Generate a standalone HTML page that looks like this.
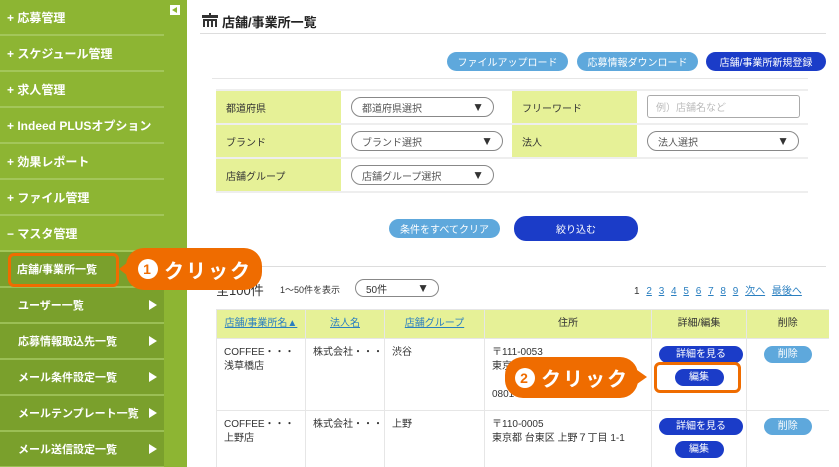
<!DOCTYPE html>
<html><head><meta charset="utf-8"><style>
*{box-sizing:border-box;margin:0;padding:0}
html,body{width:839px;height:467px;overflow:hidden}
body{background:#fff;font-family:"Liberation Sans","Noto Sans CJK JP",sans-serif;position:relative;color:#333}
.side{position:absolute;left:0;top:0;width:187px;height:467px;background:#8db533}
.menu{position:absolute;left:0;top:0;width:164px}
.mi{height:36px;border-bottom:2px solid #a3c65a;color:#fff;font-size:12px;font-weight:bold;display:flex;align-items:center;padding-left:7px;background:#8db533}
.si{height:36px;border-bottom:2px solid #9bbf55;color:#fff;font-size:11px;font-weight:bold;display:flex;align-items:center;padding-left:18px;background:#7aa02c;position:relative}
.si .ar{position:absolute;right:7px;top:12px;width:0;height:0;border-left:8px solid #fff;border-top:5px solid transparent;border-bottom:5px solid transparent}
.tog{position:absolute;left:170px;top:5px;width:10px;height:10px;background:#fff}
.tog:after{content:"";position:absolute;left:2px;top:2px;border-right:5px solid #8db533;border-top:3px solid transparent;border-bottom:3px solid transparent}
.ab{position:absolute}
.btn{position:absolute;border-radius:10px;color:#fff;font-size:10px;display:flex;align-items:center;justify-content:center}
.lb{background:#5ea8dc}.db{background:#1b3cc8}
.ft{position:absolute;left:216px;top:89px;width:592px;border-top:2px solid #eee}
.row{display:flex;height:34px;border-bottom:2px solid #eee}
.lab{width:125px;background:#e6f197;font-size:10px;display:flex;align-items:center;padding-left:10px}
.val{width:171px;position:relative}
.sel{position:absolute;left:10px;top:6px;height:20px;border:1px solid #888;border-radius:10px;font-size:10px;display:flex;align-items:center;padding-left:10px;color:#555}
.sel:after{content:"▼";position:absolute;right:9px;top:50%;transform:translateY(-50%);font-size:12px;color:#333}
table{position:absolute;left:216px;top:309px;border-collapse:collapse;font-size:10px;table-layout:fixed;width:612px}
td,th{border:1px solid #e6e6e6;vertical-align:top;padding:7px 7px;font-weight:normal;text-align:left;line-height:14px;overflow:hidden;white-space:nowrap}
th{background:#e6f197;text-align:center;vertical-align:middle;padding:0;height:29px}
th a{color:#2a7fc0;text-decoration:underline}
.sb{display:flex;align-items:center;justify-content:center;margin:0 auto;border-radius:9px;color:#fff;font-size:10px;height:17px}
.call{position:absolute;background:#ef6c00;color:#fff;font-weight:bold;border-radius:18px;display:flex;align-items:center}
.num{display:inline-flex;align-items:center;justify-content:center;width:20px;height:20px;border-radius:50%;background:#fff;color:#ef6c00;font-size:14px;margin-right:6px}
</style></head><body>
<div class="side">
<div class="menu">
<div class="mi">+ 応募管理</div>
<div class="mi">+ スケジュール管理</div>
<div class="mi">+ 求人管理</div>
<div class="mi">+ Indeed PLUSオプション</div>
<div class="mi">+ 効果レポート</div>
<div class="mi">+ ファイル管理</div>
<div class="mi">− マスタ管理</div>
<div class="si" style="padding-left:17px">店舗/事業所一覧</div>
<div class="si">ユーザー一覧<span class="ar"></span></div>
<div class="si">応募情報取込先一覧<span class="ar"></span></div>
<div class="si">メール条件設定一覧<span class="ar"></span></div>
<div class="si">メールテンプレート一覧<span class="ar"></span></div>
<div class="si">メール送信設定一覧<span class="ar"></span></div>
</div>
<div class="tog"></div>
</div>

<svg class="ab" style="left:201px;top:13px" width="18" height="14" viewBox="0 0 18 14"><rect x="1" y="2" width="16" height="3" fill="#333"/><rect x="8" y="0" width="2" height="2" fill="#333"/><rect x="2" y="6" width="14" height="8" fill="#333"/><rect x="4" y="8" width="2" height="6" fill="#fff"/><rect x="8" y="8" width="2" height="6" fill="#fff"/><rect x="12" y="8" width="2" height="6" fill="#fff"/></svg>
<div class="ab" style="left:222px;top:12px;font-size:13px;font-weight:bold;color:#222">店舗/事業所一覧</div>
<div class="ab" style="left:200px;top:33px;width:626px;height:1px;background:#ddd"></div>

<div class="btn lb" style="left:447px;top:52px;width:121px;height:19px">ファイルアップロード</div>
<div class="btn lb" style="left:577px;top:52px;width:121px;height:19px">応募情報ダウンロード</div>
<div class="btn db" style="left:706px;top:52px;width:120px;height:19px">店舗/事業所新規登録</div>
<div class="ab" style="left:212px;top:78px;width:596px;height:1px;background:#e6e6e6"></div>

<div class="ft">
<div class="row"><div class="lab">都道府県</div><div class="val"><div class="sel" style="width:143px">都道府県選択</div></div><div class="lab">フリーワード</div><div class="val"><div class="ab" style="left:10px;top:4px;width:153px;height:23px;border:1px solid #aaa;border-radius:3px;font-size:10px;display:flex;align-items:center;padding-left:8px;color:#bbb">例）店舗名など</div></div></div>
<div class="row"><div class="lab">ブランド</div><div class="val"><div class="sel" style="width:152px">ブランド選択</div></div><div class="lab">法人</div><div class="val"><div class="sel" style="width:152px">法人選択</div></div></div>
<div class="row"><div class="lab">店舗グループ</div><div class="val"><div class="sel" style="width:143px">店舗グループ選択</div></div><div style="width:296px"></div></div>
</div>

<div class="btn lb" style="left:389px;top:219px;width:111px;height:19px">条件をすべてクリア</div>
<div class="btn db" style="left:514px;top:216px;width:124px;height:25px;border-radius:12px">絞り込む</div>
<div class="ab" style="left:200px;top:266px;width:626px;height:1px;background:#ddd"></div>

<div class="ab" style="left:216px;top:280px;font-size:13px">全100件</div>
<div class="ab" style="left:280px;top:283px;font-size:9px">1〜50件を表示</div>
<div class="sel" style="left:355px;top:279px;width:84px;height:18px;color:#333">50件</div>
<div class="ab" style="left:634px;top:282px;font-size:10px;color:#333;word-spacing:4px">1 <u style="color:#2a7fc0">2</u> <u style="color:#2a7fc0">3</u> <u style="color:#2a7fc0">4</u> <u style="color:#2a7fc0">5</u> <u style="color:#2a7fc0">6</u> <u style="color:#2a7fc0">7</u> <u style="color:#2a7fc0">8</u> <u style="color:#2a7fc0">9</u> <u style="color:#2a7fc0">次へ</u> <u style="color:#2a7fc0">最後へ</u></div>

<table>
<colgroup><col style="width:89px"><col style="width:79px"><col style="width:100px"><col style="width:167px"><col style="width:95px"><col style="width:82px"></colgroup>
<tr><th><a>店舗/事業所名▲</a></th><th><a>法人名</a></th><th><a>店舗グループ</a></th><th>住所</th><th>詳細/編集</th><th style="border-right:none">削除</th></tr>
<tr style="height:72px"><td>COFFEE・・・<br>浅草橋店</td><td>株式会社・・・</td><td>渋谷</td><td>〒111-0053<br>東京都<br><br>0801</td><td><span class="sb db" style="width:84px">詳細を見る</span><span class="sb db" style="width:49px;margin-top:6px">編集</span></td><td style="border-right:none"><span class="sb lb" style="width:48px">削除</span></td></tr>
<tr style="height:60px"><td>COFFEE・・・<br>上野店</td><td>株式会社・・・</td><td>上野</td><td>〒110-0005<br>東京都 台東区 上野７丁目 1-1</td><td><span class="sb db" style="width:84px">詳細を見る</span><span class="sb db" style="width:49px;margin-top:6px">編集</span></td><td style="border-right:none"><span class="sb lb" style="width:48px">削除</span></td></tr>
</table>

<div class="ab" style="left:8px;top:253px;width:111px;height:34px;border:3px solid #ef6c00;border-radius:6px"></div>
<div class="call" style="left:126px;top:248px;width:136px;height:42px;font-size:20px;padding-left:12px;letter-spacing:2px"><span class="num">1</span>クリック</div>
<div class="ab" style="left:119px;top:262px;border-right:9px solid #ef6c00;border-top:7px solid transparent;border-bottom:7px solid transparent"></div>

<div class="ab" style="left:654px;top:362px;width:87px;height:31px;border:3px solid #ef6c00;border-radius:6px"></div>
<div class="call" style="left:505px;top:357px;width:133px;height:41px;font-size:20px;padding-left:10px;letter-spacing:2px"><span class="num">2</span>クリック</div>
<div class="ab" style="left:637px;top:370px;border-left:10px solid #ef6c00;border-top:7px solid transparent;border-bottom:7px solid transparent"></div>
</body></html>
